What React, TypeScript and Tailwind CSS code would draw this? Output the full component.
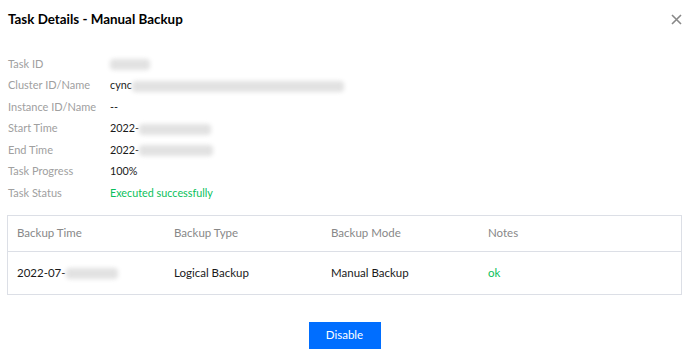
const font = { fontFamily: 'Lato, "Noto Sans", sans-serif' };

function Blur({ w }: { w: number }) {
  return (
    <span
      className="inline-block h-[11px] translate-y-[1px] rounded-sm bg-[#e2e2e2] blur-[2px]"
      style={{ width: w }}
    />
  );
}

const rows = [
  { label: "Task ID", value: <Blur w={40} /> },
  { label: "Cluster ID/Name", value: <>cync<Blur w={212} /></> },
  { label: "Instance ID/Name", value: "--" },
  { label: "Start Time", value: <>2022-<Blur w={72} /></> },
  { label: "End Time", value: <>2022-<Blur w={74} /></> },
  { label: "Task Progress", value: "100%" },
  { label: "Task Status", value: <span className="text-[#0abf5b]">Executed successfully</span> },
];

export default function App() {
  return (
    <div className="h-[356px] w-[691px] bg-white text-[11.5px] text-[#1a1a1a]" style={font}>
      <div className="flex items-center justify-between pl-[8px] pr-[10px] pt-[9px]">
        <h1 className="text-[13.4px] font-bold leading-[20px] text-black">Task Details - Manual Backup</h1>
        <svg width="11" height="11" viewBox="0 0 11 11" className="mr-[-1px]">
          <path d="M1 1L10 10M10 1L1 10" stroke="#888" strokeWidth="1.6" />
        </svg>
      </div>

      <div className="mt-[24px] flex flex-col pl-[8px]">
        {rows.map(({ label, value }) => (
          <div key={label} className="flex h-[21.5px] items-center">
            <span className="w-[102px] text-[11px] text-[#a0a0a0]">{label}</span>
            <span className="flex items-center text-[10.8px]">{value}</span>
          </div>
        ))}
      </div>

      <div className="mx-[7px] mt-[11px] w-[675px] border border-[#dcdfe6]">
        <div className="grid h-[36px] grid-cols-[157px_157px_157px_1fr] items-center border-b border-[#dcdfe6] pl-[9px] text-[#888]">
          <span>Backup Time</span>
          <span>Backup Type</span>
          <span>Backup Mode</span>
          <span>Notes</span>
        </div>
        <div className="grid h-[42px] grid-cols-[157px_157px_157px_1fr] items-center pl-[9px]">
          <span className="flex items-center">2022-07-<Blur w={52} /></span>
          <span>Logical Backup</span>
          <span>Manual Backup</span>
          <span className="text-[#0abf5b]">ok</span>
        </div>
      </div>

      <div className="mt-[27px] flex justify-center">
        <button className="ml-[-2px] h-[27px] w-[72px] bg-[#006eff] text-[11.5px] text-white">Disable</button>
      </div>
    </div>
  );
}
